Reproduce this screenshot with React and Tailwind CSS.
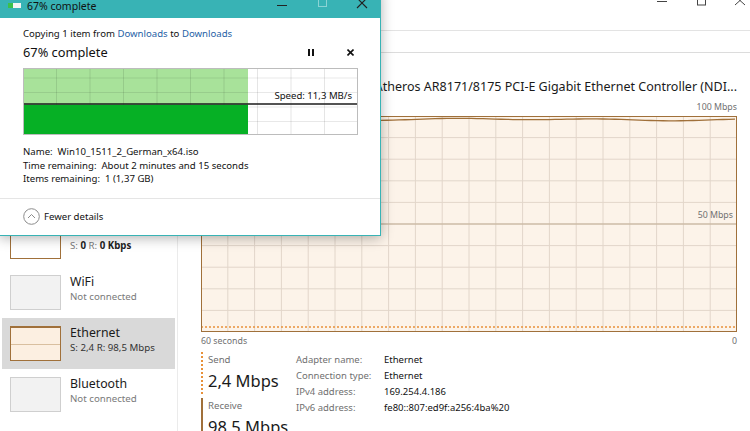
import React from "react";

const W = 536;
const H = 216;

function NetChart() {
  const vx = Array.from({ length: 19 }, (_, i) => ((i + 1) * W) / 20);
  const hy = Array.from({ length: 9 }, (_, i) => ((i + 1) * H) / 10);
  const wave = [];
  for (let x = 0; x <= W; x += 6) {
    const y = 3.5 + Math.sin(x / 23) * 0.7 + Math.sin(x / 61) * 0.6;
    wave.push(`${x},${y.toFixed(2)}`);
  }
  return (
    <svg width={W} height={H} className="block">
      <rect x="0" y="0" width={W} height={H} fill="#fcf3e9" />
      {vx.map((x) => (
        <line key={"v" + x} x1={x} y1="0" x2={x} y2={H} stroke="#e2d6ca" strokeWidth="1" />
      ))}
      {hy.map((y, i) => (
        <line
          key={"h" + y}
          x1="0"
          y1={y}
          x2={W}
          y2={y}
          stroke={i === 4 ? "#cdbba6" : "#e2d6ca"}
          strokeWidth={i === 4 ? 1.5 : 1}
        />
      ))}
      <polyline points={wave.join(" ")} fill="none" stroke="#a0703a" strokeWidth="1.3" />
      <line x1="0" y1={H - 5} x2={W} y2={H - 5} stroke="#e8913a" strokeWidth="1.5" strokeDasharray="2 2" />
      <rect x="0.5" y="0.5" width={W - 1} height={H - 1} fill="none" stroke="#a0703a" strokeWidth="1" />
    </svg>
  );
}

function CopyGraph() {
  const gw = 335;
  const gh = 67;
  const vx = Array.from({ length: 9 }, (_, i) => ((i + 1) * gw) / 10);
  const hy = [10, 24.5, 39, 53.5];
  return (
    <svg width={gw} height={gh} className="block">
      <rect x="0" y="0" width={gw} height={gh} fill="#ffffff" />
      <rect x="0" y="0" width="225" height="36" fill="#a8e29a" />
      {vx.map((x) => (
        <line key={"v" + x} x1={x} y1="0" x2={x} y2={gh} stroke="rgba(0,0,0,0.1)" strokeWidth="1" />
      ))}
      {hy.map((y) => (
        <line key={"h" + y} x1="0" y1={y} x2={gw} y2={y} stroke="rgba(0,0,0,0.09)" strokeWidth="1" />
      ))}
      <rect x="0" y="36.5" width="225" height="31" fill="#06b025" />
      <line x1="1" y1="36" x2={gw - 1} y2="36" stroke="#1a1a1a" strokeWidth="1.6" />
      <rect x="0.5" y="0.5" width={gw - 1} height={gh - 1} fill="none" stroke="#bcbcbc" strokeWidth="1" />
    </svg>
  );
}

function Thumb({ kind }) {
  if (kind === "active") {
    return (
      <div className="w-[51px] h-[35px] shrink-0 border border-[#a0703a] border-t-2 bg-[#fcefe1] flex flex-col justify-center">
        <div className="h-px bg-[#d9bf9f]" />
      </div>
    );
  }
  if (kind === "idle") {
    return <div className="w-[51px] h-[35px] shrink-0 border border-[#a0703a] bg-white" />;
  }
  return <div className="w-[51px] h-[35px] shrink-0 border border-[#cfcfcf] bg-[#f2f2f2]" />;
}

function SideItem({ kind, name, children, selected }) {
  return (
    <div className={`h-[51px] mx-[2px] pl-[8px] pt-[8px] flex items-start ${selected ? "bg-[#d9d9d9]" : ""}`}>
      <Thumb kind={kind} />
      <div className="ml-[9px] -mt-[2px]">
        <div className="text-[12.3px] leading-[17px] text-[#1a1a1a]">{name}</div>
        <div className="text-[9.7px] leading-[14px] text-[#7a7a7a] whitespace-nowrap">{children}</div>
      </div>
    </div>
  );
}

function TaskManager() {
  return (
    <div className="flex flex-col h-full">
      {/* title + menu row */}
      <div className="h-[31px] border-b border-[#e3e3e3] flex justify-end items-start shrink-0">
        <svg width="100" height="10" className="block">
          <line x1="7" y1="1.5" x2="17" y2="1.5" stroke="#444" strokeWidth="1" />
          <rect x="47.5" y="-3" width="8" height="8" fill="none" stroke="#444" strokeWidth="1" />
          <line x1="85" y1="-4" x2="95" y2="5" stroke="#444" strokeWidth="1" />
          <line x1="95" y1="-4" x2="85" y2="5" stroke="#444" strokeWidth="1" />
        </svg>
      </div>
      {/* tabs row */}
      <div className="h-[22px] border-b border-[#dcdcdc] shrink-0" />

      <div className="flex flex-1 min-h-0">
        {/* sidebar */}
        <div className="w-[178px] shrink-0 border-r border-[#ebebeb] pt-[10px]">
          <SideItem kind="idle" name="CPU">8% 3,40 GHz</SideItem>
          <SideItem kind="idle" name="Memory">4,1/7,9 GB (52%)</SideItem>
          <SideItem kind="idle" name="Disk 0 (C:)">1%</SideItem>
          <SideItem kind="idle" name="Ethernet">
            S: <span className="font-bold text-[#222]">0</span> R:{" "}
            <span className="font-bold text-[#222]">0 Kbps</span>
          </SideItem>
          <SideItem kind="off" name="WiFi">Not connected</SideItem>
          <SideItem kind="active" name="Ethernet" selected>
            <span className="text-[#333]">S: 2,4 R: 98,5 Mbps</span>
          </SideItem>
          <SideItem kind="off" name="Bluetooth">Not connected</SideItem>
        </div>

        {/* main */}
        <div className="flex-1 pl-[23px] pr-[13px] flex flex-col">
          <div className="pt-[12px] h-[46px] flex items-end justify-between">
            <div className="text-[22px] leading-[34px]">Ethernet</div>
            <div className="text-[12.5px] leading-[20px] mb-[2px] text-[#1a1a1a] whitespace-nowrap">
              Qualcomm Atheros AR8171/8175 PCI-E Gigabit Ethernet Controller (NDI...
            </div>
          </div>

          <div className="mt-[1px] flex justify-between text-[8.8px] leading-[14px] text-[#707070]">
            <span>Throughput</span>
            <span>100 Mbps</span>
          </div>

          <div className="relative mt-[2px] w-[536px] h-[216px]">
            <NetChart />
            <span className="absolute right-[4px] top-[92px] text-[8.8px] leading-[14px] text-[#707070]">
              50 Mbps
            </span>
          </div>

          <div className="mt-[2px] flex justify-between text-[8.8px] leading-[14px] text-[#707070]">
            <span>60 seconds</span>
            <span>0</span>
          </div>

          <div className="mt-[4px] flex items-start">
            <div className="w-[95px] shrink-0">
              <div className="border-l-2 border-dotted border-[#e8913a] pl-[5px]">
                <div className="text-[9.6px] leading-[16px] text-[#707070]">Send</div>
                <div className="text-[16.5px] leading-[26px] whitespace-nowrap">2,4 Mbps</div>
              </div>
              <div className="mt-[4px] border-l-2 border-[#a0703a] pl-[5px]">
                <div className="text-[9.6px] leading-[16px] text-[#707070]">Receive</div>
                <div className="text-[16.5px] leading-[26px] whitespace-nowrap">98,5 Mbps</div>
              </div>
            </div>
            <div className="grid grid-cols-[88px_auto] content-start text-[9.5px] leading-[16px] whitespace-nowrap">
              <span className="text-[#707070]">Adapter name:</span>
              <span className="text-[#111]">Ethernet</span>
              <span className="text-[#707070]">Connection type:</span>
              <span className="text-[#111]">Ethernet</span>
              <span className="text-[#707070]">IPv4 address:</span>
              <span className="text-[#111]">169.254.4.186</span>
              <span className="text-[#707070]">IPv6 address:</span>
              <span className="text-[#111]">fe80::807:ed9f:a256:4ba%20</span>
            </div>
          </div>
        </div>
      </div>
    </div>
  );
}

function CopyDialog() {
  return (
    <div className="absolute left-[-1px] top-[-11px] w-[382px] border border-[#38b3b5] bg-white shadow-[0_2px_12px_rgba(0,0,0,0.3)] flex flex-col">
      {/* title bar */}
      <div className="h-[28px] bg-[#38b3b5] flex items-start">
        <svg width="14" height="6" className="block ml-[8px] mt-[13px]">
          <rect x="0" y="0" width="13" height="5" fill="#f4f4f4" />
          <rect x="0" y="0" width="5" height="5" fill="#3cc04a" />
        </svg>
        <div className="ml-[5px] mt-[8px] text-[10.5px] leading-[16px] text-[#111]">67% complete</div>
        <div className="flex-1" />
        <svg width="110" height="12" className="block mt-[10px]">
          <line x1="7" y1="5.5" x2="17" y2="5.5" stroke="#222" strokeWidth="1" />
          <rect x="48.5" y="-3" width="8" height="9.5" fill="none" stroke="#8ad3d4" strokeWidth="1" />
          <line x1="87" y1="-2" x2="97" y2="8" stroke="#222" strokeWidth="1.1" />
          <line x1="97" y1="-2" x2="87" y2="8" stroke="#222" strokeWidth="1.1" />
        </svg>
      </div>

      {/* body */}
      <div className="pl-[23px] pr-[22px] pt-[8px]">
        <div className="text-[9.6px] leading-[16px] text-[#111]">
          Copying 1 item from <span className="text-[#1f5fa6]">Downloads</span> to{" "}
          <span className="text-[#1f5fa6]">Downloads</span>
        </div>
        <div className="h-[20px] flex items-center">
          <div className="flex-1 text-[12.8px] leading-[20px] text-[#111]">67% complete</div>
          <div className="flex gap-[2px] mr-[33px]">
            <div className="w-[2px] h-[7px] bg-[#111]" />
            <div className="w-[2px] h-[7px] bg-[#111]" />
          </div>
          <svg width="7" height="7" className="block mr-[4px]">
            <line x1="0.5" y1="0.5" x2="6.5" y2="6.5" stroke="#111" strokeWidth="1.6" />
            <line x1="6.5" y1="0.5" x2="0.5" y2="6.5" stroke="#111" strokeWidth="1.6" />
          </svg>
        </div>

        <div className="relative mt-[6px] w-[335px] h-[67px]">
          <CopyGraph />
          <span className="absolute right-[6px] top-[21px] text-[9.6px] leading-[14px] text-[#111]">
            Speed: 11,3 MB/s
          </span>
        </div>

        <div className="mt-[10px] text-[9.6px] leading-[13.5px] text-[#111]">
          <div>Name:&nbsp; Win10_1511_2_German_x64.iso</div>
          <div>Time remaining:&nbsp; About 2 minutes and 15 seconds</div>
          <div>Items remaining:&nbsp; 1 (1,37 GB)</div>
        </div>
      </div>

      <div className="mt-[12px] border-t border-[#e5e5e5] h-[37px] flex items-center pl-[23px]">
        <svg width="17" height="17" className="block">
          <circle cx="8.5" cy="8.5" r="7.8" fill="none" stroke="#8c8c8c" strokeWidth="1" />
          <polyline points="5,10 8.5,6.5 12,10" fill="none" stroke="#8c8c8c" strokeWidth="1" />
        </svg>
        <span className="ml-[4px] text-[9.6px] leading-[16px] text-[#111]">Fewer details</span>
      </div>
    </div>
  );
}

export default function App() {
  return (
    <div className="relative w-[750px] h-[431px] overflow-hidden bg-white font-['Noto_Sans',sans-serif] text-[#1a1a1a]">
      <TaskManager />
      <CopyDialog />
    </div>
  );
}
